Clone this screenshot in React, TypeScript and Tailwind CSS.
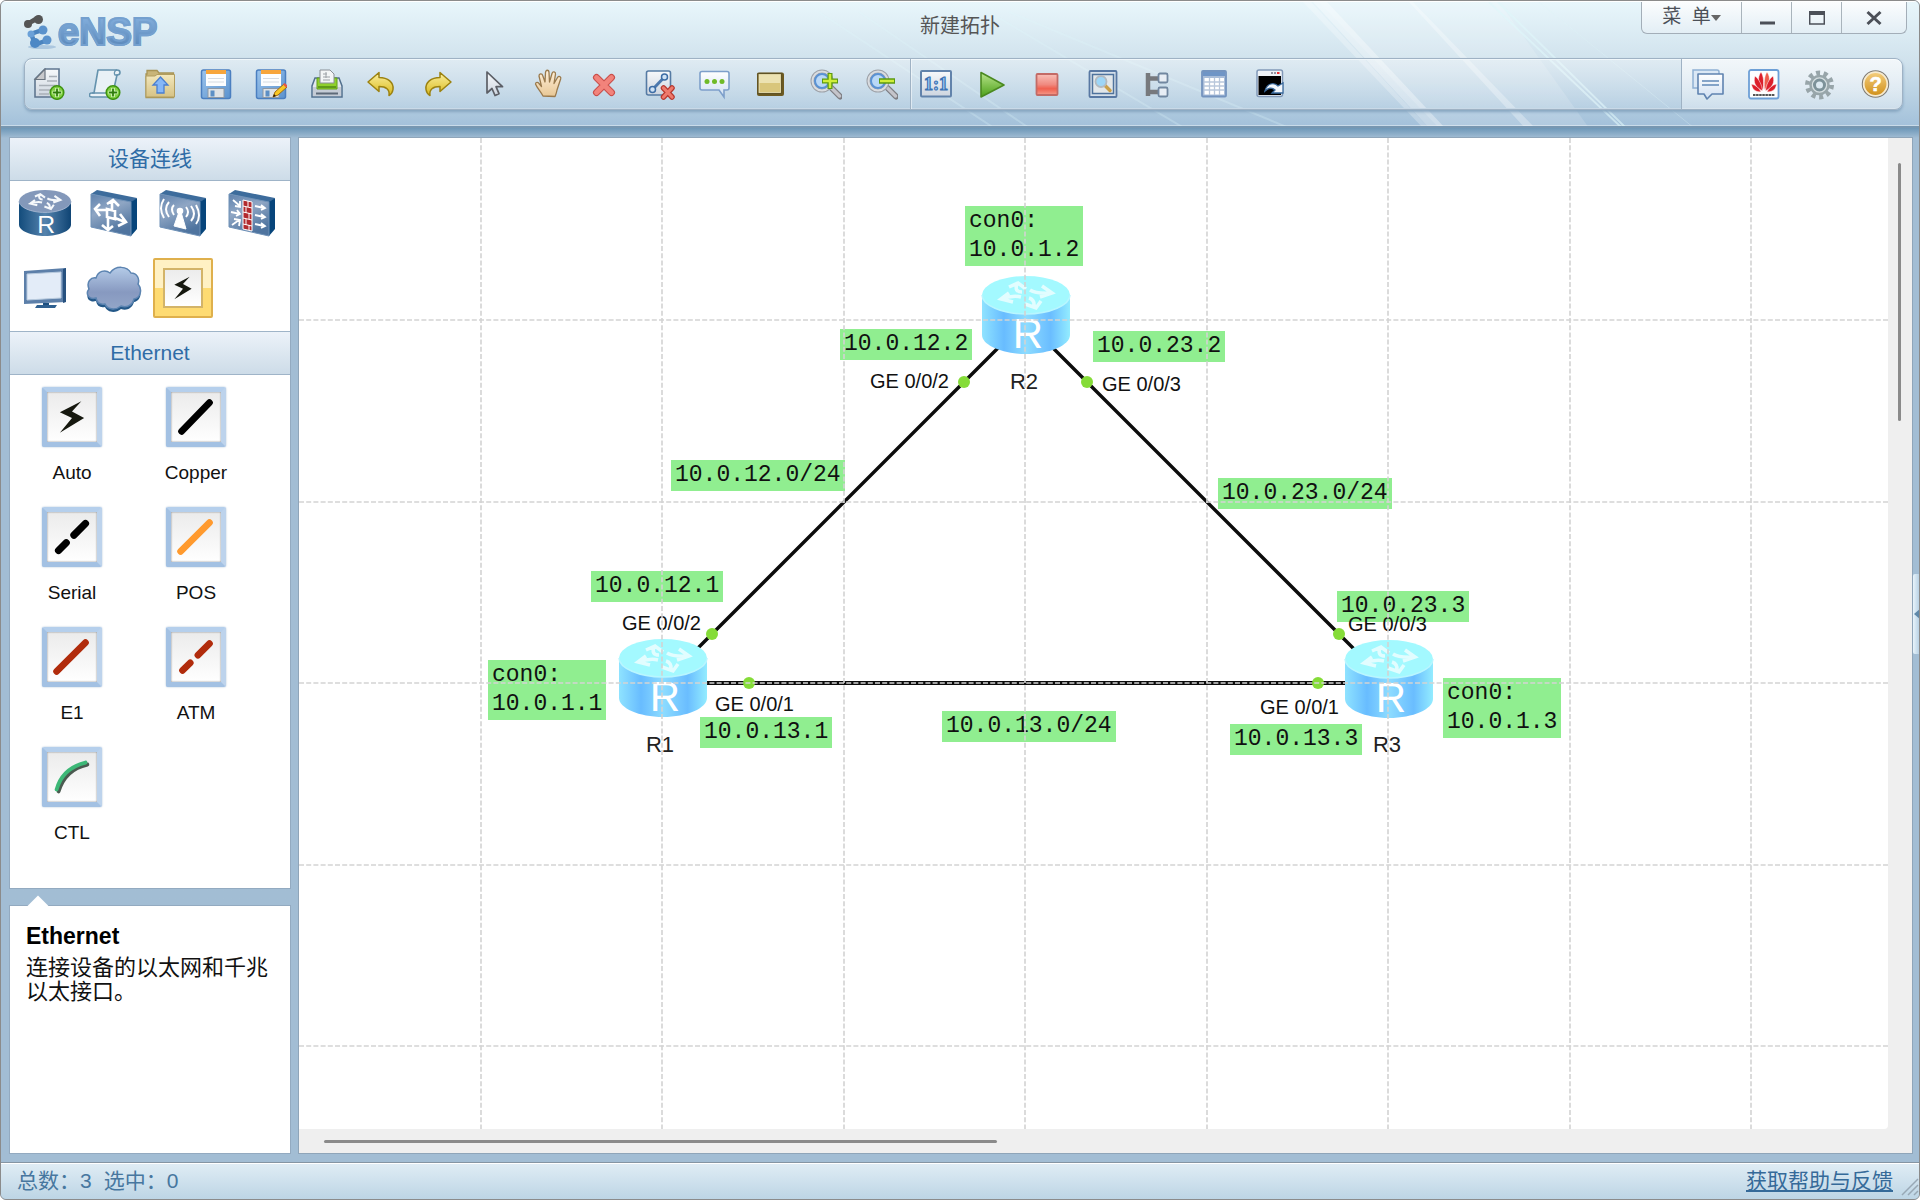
import type { ReactNode } from "react"

const Defs = () => (
    <svg className="absolute w-0 h-0" aria-hidden="true">
        <defs>
            <linearGradient id="paper" x1="0" y1="0" x2="0" y2="1">
                <stop offset="0" stopColor="#f7f9fb" />
                <stop offset="1" stopColor="#cdd5df" />
            </linearGradient>
            <linearGradient id="sand" x1="0" y1="0" x2="0" y2="1">
                <stop offset="0" stopColor="#f3e8bd" />
                <stop offset="1" stopColor="#d6c284" />
            </linearGradient>
            <linearGradient id="blue" x1="0" y1="0" x2="1" y2="1">
                <stop offset="0" stopColor="#9cc4ec" />
                <stop offset="1" stopColor="#5b92ce" />
            </linearGradient>
            <linearGradient id="gold" x1="0" y1="0" x2="0" y2="1">
                <stop offset="0" stopColor="#fbf0a0" />
                <stop offset="1" stopColor="#d9b91c" />
            </linearGradient>
            <linearGradient id="green" x1="0" y1="0" x2="0" y2="1">
                <stop offset="0" stopColor="#b9e48c" />
                <stop offset="1" stopColor="#4ba018" />
            </linearGradient>
            <linearGradient id="red" x1="0" y1="0" x2="0" y2="1">
                <stop offset="0" stopColor="#f9c0b8" />
                <stop offset="0.5" stopColor="#f08a80" />
                <stop offset="0.7" stopColor="#f0604f" />
                <stop offset="1" stopColor="#f59a8a" />
            </linearGradient>
            <linearGradient id="bubble" x1="0" y1="0" x2="0" y2="1">
                <stop offset="0" stopColor="#ffffff" />
                <stop offset="1" stopColor="#cfdff2" />
            </linearGradient>
            <linearGradient id="orange" x1="0" y1="0" x2="0" y2="1">
                <stop offset="0" stopColor="#f6d183" />
                <stop offset="1" stopColor="#cf8d14" />
            </linearGradient>
            <linearGradient id="skin" x1="0" y1="0" x2="0" y2="1">
                <stop offset="0" stopColor="#fff0da" />
                <stop offset="1" stopColor="#e8c795" />
            </linearGradient>
            <linearGradient id="face" x1="0" y1="0" x2="0.4" y2="1">
                <stop offset="0" stopColor="#5f82ad" />
                <stop offset="0.45" stopColor="#8fa6c4" />
                <stop offset="1" stopColor="#4f749f" />
            </linearGradient>
            <linearGradient id="sideDark" x1="0" y1="0" x2="1" y2="0">
                <stop offset="0" stopColor="#134c7c" />
                <stop offset="0.5" stopColor="#5583ad" />
                <stop offset="1" stopColor="#0f4474" />
            </linearGradient>
            <linearGradient id="sideLight" x1="0" y1="0" x2="1" y2="0">
                <stop offset="0" stopColor="#8fe3ff" />
                <stop offset="0.25" stopColor="#68bcff" />
                <stop offset="0.5" stopColor="#8ddcff" />
                <stop offset="0.78" stopColor="#6abdff" />
                <stop offset="1" stopColor="#93ecff" />
            </linearGradient>
            <linearGradient id="cloud" x1="0" y1="0" x2="0" y2="1">
                <stop offset="0" stopColor="#b4cbe8" />
                <stop offset="0.6" stopColor="#8799c0" />
                <stop offset="1" stopColor="#93a6c8" />
            </linearGradient>
        </defs>
    </svg>
)

const Icon = ({ children }: { children: ReactNode }) => (
    <svg viewBox="0 0 32 32" className="w-8 h-8" aria-hidden="true">{children}</svg>
)

const Plus = () => (
    <g>
        <circle cx="24" cy="24.500" r="6.800" fill="#7fd040" stroke="#3f9310" strokeWidth="1.500" />
        <path d="M24 20v9M19.500 24.500h9" stroke="#dcf8c4" strokeWidth="3.500" />
        <path d="M24 20.500v8M20 24.500h8" stroke="#2f7d0c" strokeWidth="1.800" />
    </g>
)

const Floppy = () => (
    <g>
        <rect x="1.500" y="2" width="29" height="28.500" rx="2" fill="url(#blue)" stroke="#4b7fc0" strokeWidth="1.500" />
        <rect x="6" y="2" width="20" height="4" fill="#f7a53b" />
        <rect x="6" y="6" width="20" height="12" fill="#fcfdfe" />
        <path d="M8 10.500h16M8 14h16" stroke="#d5dbe2" />
        <rect x="8" y="20.500" width="16" height="9" fill="#dfe2e5" stroke="#8c98a5" />
        <rect x="10.500" y="22.500" width="4" height="6" fill="#5d8fc5" />
    </g>
)

const Lens = () => (
    <g>
        <path d="M21 19.500l9 9" stroke="#7d7d82" strokeWidth="6" strokeLinecap="round" />
        <path d="M21 19.500l8.500 8.500" stroke="#c4c4ca" strokeWidth="3.500" strokeLinecap="round" />
        <circle cx="12" cy="13" r="9.500" fill="#b9d8f7" stroke="#9ea2a8" strokeWidth="4" />
        <circle cx="12" cy="13" r="9.500" fill="none" stroke="#d9dce0" strokeWidth="2" />
        <circle cx="12" cy="13" r="7" fill="none" stroke="#5a92d4" strokeWidth="2" />
    </g>
)

const editTools = [
    {
        name: "New topology",
        icon: (
            <g>
                <path d="M12 1h14v28H2V11z" fill="url(#paper)" stroke="#5f7690" strokeWidth="1.600" />
                <path d="M12 1v10.500H2z" fill="#c8c9cc" stroke="#6b7580" strokeWidth="1.200" />
                <path d="M16 8.500h8M14 13h10M6 17.500h18M6 22h12M6 26h10" stroke="#a9b0b8" strokeWidth="1.500" />
                <Plus />
            </g>
        ),
    },
    {
        name: "New paper",
        icon: (
            <g>
                <path d="M9 2h19c4 0 4 5 0 5l-5 22H3c-4 0-3-4 0-4h2z" fill="#e9f1f6" stroke="#6593ae" strokeWidth="1.600" strokeLinejoin="round" />
                <path d="M28 2c-3 0-3 4-2 5h3M3 25h17" fill="none" stroke="#6593ae" strokeWidth="1.300" />
                <Plus />
            </g>
        ),
    },
    {
        name: "Open",
        icon: (
            <g>
                <path d="M3 6V2.500h10L15 5h14.500v24.500H2V6z" fill="#c9b578" stroke="#a89455" strokeWidth="1.300" />
                <path d="M2 8h9l2-1.500h17.500V29H2z" fill="url(#sand)" stroke="#b19d5f" />
                <path d="M16.500 9l7.500 8h-4v8h-7v-8H9z" fill="#86b7f7" stroke="#4b7fd0" strokeWidth="1.300" />
            </g>
        ),
    },
    { name: "Save", icon: <Floppy /> },
    {
        name: "Save as",
        icon: (
            <g>
                <Floppy />
                <path d="M18 29l2-5 9-8 3 3-9 8z" fill="#f9c823" stroke="#a26b11" />
                <path d="M28 16.500l1.500-1.500 3 2.500-1.500 2z" fill="#e2574a" />
                <path d="M18 29l1-3 2 2z" fill="#2b1c06" />
            </g>
        ),
    },
    {
        name: "Print",
        icon: (
            <g>
                <path d="M4 10h24l3 8v11H1V18z" fill="#e3e8ed" stroke="#52708e" strokeWidth="1.500" />
                <path d="M2 19h28v9H2z" fill="#c5ccd6" />
                <path d="M6 10h20v11H6z" fill="#8fd02c" stroke="#62a016" />
                <path d="M7 18h18v2H7z" fill="#5f9a1a" />
                <path d="M9 2h10l4 4v9H9z" fill="#f4f5f6" stroke="#8b9096" />
                <path d="M12 6h4M12 9h7M12 12h7M15 4v6" stroke="#9da1a6" />
                <path d="M5 25.500h22" stroke="#5e6a78" strokeWidth="2" />
            </g>
        ),
    },
    {
        name: "Undo",
        icon: <path d="M2 14L13 4.500v5c9 0 15 5 14 12-.5 3-2 5-4 6 1-6-3-9-10-9v5z" fill="url(#gold)" stroke="#9c8210" strokeWidth="1.500" strokeLinejoin="round" />,
    },
    {
        name: "Redo",
        icon: <path d="M29 14L18 4.500v5c-9 0-15 5-14 12 .5 3 2 5 4 6-1-6 3-9 10-9v5z" fill="url(#gold)" stroke="#9c8210" strokeWidth="1.500" strokeLinejoin="round" />,
    },
    {
        name: "Select",
        icon: <path d="M10 4v21l5-4.500 3 7 4-1.800-3-7h6.500z" fill="url(#paper)" stroke="#5c5f66" strokeWidth="1.700" strokeLinejoin="round" />,
    },
    {
        name: "Pan",
        icon: <path d="M10 28c-2-4-6-8-7.500-12 0-2 2.500-2 3.500-.5l2.500 3L6 8c0-2.500 3-3 3.700-.5L12 14l.5-9.500c0-3 3.500-3 3.500 0L16.500 14 19 5.500c.7-2.500 3.800-2 3.500.7L21 15.500l3.500-6c1.300-2 3.800-1 3.200 1.200L24 22c-.5 3-1 4-2 6.500z" fill="url(#skin)" stroke="#9a7a4d" strokeWidth="1.300" strokeLinejoin="round" />,
    },
    {
        name: "Delete",
        icon: (
            <g strokeLinecap="round">
                <path d="M8.500 9.500l15 15M23.500 9.500l-15 15" stroke="#c9504c" strokeWidth="7" />
                <path d="M8.500 9.500l15 15M23.500 9.500l-15 15" stroke="#f2837b" strokeWidth="4.800" />
            </g>
        ),
    },
    {
        name: "Delete links",
        icon: (
            <g>
                <rect x="2.500" y="3" width="24" height="24" rx="2" fill="url(#paper)" stroke="#567ba4" strokeWidth="1.600" />
                <path d="M9 21L20 9.500" stroke="#4d78ad" strokeWidth="3" />
                <circle cx="8.500" cy="21.500" r="3" fill="#cfe2f5" stroke="#3e6da5" strokeWidth="1.500" />
                <circle cx="20.500" cy="9" r="3" fill="#cfe2f5" stroke="#3e6da5" strokeWidth="1.500" />
                <path d="M19.500 20l8.500 9M28 20l-8.500 9" stroke="#b8382f" strokeWidth="5.500" strokeLinecap="round" />
                <path d="M19.500 20l8.500 9M28 20l-8.500 9" stroke="#ee7a6d" strokeWidth="3.200" strokeLinecap="round" />
            </g>
        ),
    },
    {
        name: "Text",
        icon: (
            <g>
                <path d="M3 3.500h25q2 0 2 2V20q0 2-2 2h-3v7l-5-7H3q-2 0-2-2V5.500q0-2 2-2z" fill="url(#bubble)" stroke="#7d9fca" strokeWidth="1.600" />
                <g fill="#6fba28">
                    <circle cx="8" cy="13.500" r="2.500" />
                    <circle cx="15.500" cy="13.500" r="2.500" />
                    <circle cx="23" cy="13.500" r="2.500" />
                </g>
            </g>
        ),
    },
    {
        name: "Palette",
        icon: (
            <g>
                <rect x="2" y="4.500" width="27" height="23.500" rx="2" fill="#6d5a22" />
                <rect x="3" y="5.500" width="23.500" height="20" fill="#ece2b2" stroke="#5f5224" strokeWidth="1.200" />
                <path d="M4.500 15h20.500v9H4.500z" fill="#d9c67c" />
            </g>
        ),
    },
    {
        name: "Zoom in",
        icon: (
            <g>
                <Lens />
                <path d="M20 5v16M12 13h16" stroke="#5d9a10" strokeWidth="5" />
                <path d="M20 6v14M13 13h14" stroke="#cfee3a" strokeWidth="2.500" />
            </g>
        ),
    },
    {
        name: "Zoom out",
        icon: (
            <g>
                <Lens />
                <path d="M13 13h16" stroke="#5d9a10" strokeWidth="5.500" />
                <path d="M14 13h14" stroke="#cfee3a" strokeWidth="2.500" />
            </g>
        ),
    },
]

const runTools = [
    {
        name: "Original size",
        icon: (
            <g>
                <rect x="1" y="3" width="30" height="25.500" rx="1" fill="url(#paper)" stroke="#6283ab" strokeWidth="2" />
                <text x="16" y="22" textAnchor="middle" fontFamily="Liberation Serif, serif" fontWeight="700" fontSize="18" fill="#a9d0f5" stroke="#3b72b4" strokeWidth="1.200">1:1</text>
            </g>
        ),
    },
    { name: "Start", icon: <path d="M5 4.500l23 12.500L5 29z" fill="url(#green)" stroke="#4b8a20" strokeWidth="1.600" strokeLinejoin="round" /> },
    { name: "Stop", icon: <rect x="5.500" y="6" width="21" height="21" rx="1" fill="url(#red)" stroke="#c36b66" strokeWidth="1.800" /> },
    {
        name: "Inspect",
        icon: (
            <g>
                <rect x="2.500" y="3" width="27" height="26" rx="1" fill="#d4dfea" stroke="#5878a3" strokeWidth="1.800" />
                <rect x="5.500" y="6.500" width="21" height="19" fill="#e2e7ea" stroke="#4f739d" strokeWidth="1.500" />
                <path d="M17.500 17l5.500 5.500" stroke="#caa04a" strokeWidth="3.500" strokeLinecap="round" />
                <circle cx="14" cy="13.500" r="5.500" fill="#9ed6f7" stroke="#b2bac1" strokeWidth="1.800" />
            </g>
        ),
    },
    {
        name: "Tree",
        icon: (
            <g>
                <path d="M6 5v23M6 10.500h10M6 24h10" fill="none" stroke="#77797d" strokeWidth="4.500" />
                <rect x="16.500" y="5.500" width="9" height="9" rx="1.500" fill="#e8eef5" stroke="#7187a0" strokeWidth="1.800" />
                <rect x="16.500" y="19.500" width="9" height="9" rx="1.500" fill="#e8eef5" stroke="#7187a0" strokeWidth="1.800" />
            </g>
        ),
    },
    {
        name: "Interfaces",
        icon: (
            <g>
                <rect x="4" y="3" width="24" height="25.500" rx="1" fill="#a9bdd8" stroke="#7494bf" strokeWidth="1.800" />
                <path d="M5 4h22v4H5z" fill="#6f95c6" />
                <path d="M6.500 10h19.500v16.500H6.500z" fill="#fff" />
                <path d="M11.500 10v17M16.500 10v17M21.500 10v17M6 14h20M6 18h20M6 22h20" stroke="#b9c7db" strokeWidth="1.300" />
            </g>
        ),
    },
    {
        name: "Console",
        icon: (
            <g>
                <rect x="4" y="2" width="25.500" height="26.500" rx="2" fill="#eef2f6" stroke="#8199b8" strokeWidth="1.500" />
                <path d="M18 5h2M21 5h2" stroke="#778" strokeWidth="1.500" />
                <path d="M24 5h2.500" stroke="#e33" strokeWidth="2" />
                <rect x="5.500" y="8" width="22.500" height="19" fill="#000" />
                <path d="M12 23c2-8 9-9 13-5l5-3v10H19l3-3c-3-3-7-2-10 1z" fill="#f2f7fc" stroke="#39689b" strokeWidth="1.300" />
            </g>
        ),
    },
]

const helpTools = [
    {
        name: "Forum",
        icon: (
            <g>
                <path d="M1 2h24q2 0 2 2v14q0 2-2 2H1z" fill="#dbe8f5" stroke="#8fb0d3" strokeWidth="1.500" />
                <path d="M6 6h25v20H20l-5 5-3-5H6z" fill="url(#bubble)" stroke="#5f83b0" strokeWidth="1.600" strokeLinejoin="round" />
                <path d="M10 13h17M10 17h17" stroke="#6289b8" strokeWidth="1.300" />
            </g>
        ),
    },
    {
        name: "Huawei",
        icon: (
            <g>
                <rect x="1" y="2" width="29.500" height="28.500" rx="2" fill="#fdfefe" stroke="#6d9fd6" strokeWidth="1.800" />
                <g fill="#dc1f2b" stroke="#fff" strokeWidth="0.500">
                    <path d="M15 22C10 17 9 9 13 4c3 4 3 12 2 18z" />
                    <path d="M16.500 22C22 17 23 9 19 4c-3 4-3 12-2.500 18z" fill="#ee5c4c" />
                    <path d="M14.500 23C7 19 5 14 7 8c4 3 7 9 7.500 15z" />
                    <path d="M17.500 23C25 19 27 14 25 8c-4 3-7 9-7.500 15z" />
                    <path d="M13 24c-6 0-9-3-9.500-8 4 1 8 4 9.500 8z" />
                    <path d="M19 24c6 0 9-3 9.500-8-4 1-8 4-9.500 8z" />
                </g>
                <path d="M5 27h22" stroke="#555" strokeWidth="2.200" strokeDasharray="2.500 0.600" />
            </g>
        ),
    },
    {
        name: "Settings",
        icon: (
            <g>
                <circle cx="15.500" cy="17" r="12" fill="none" stroke="#98a5a9" strokeWidth="5" strokeDasharray="4 3.540" />
                <circle cx="15.500" cy="17" r="9" fill="#d6dfe1" stroke="#98a6aa" strokeWidth="2.500" />
                <circle cx="15.500" cy="17" r="5" fill="#dce9f1" stroke="#7d9299" strokeWidth="3" />
            </g>
        ),
    },
    {
        name: "Help",
        icon: (
            <g>
                <circle cx="15.500" cy="16" r="13" fill="url(#orange)" stroke="#7f7c76" strokeWidth="1.500" />
                <circle cx="15.500" cy="16" r="11.800" fill="none" stroke="#f5ead0" strokeWidth="1.800" />
                <text x="15.500" y="23" textAnchor="middle" fontFamily="Liberation Sans, sans-serif" fontWeight="700" fontSize="20" fill="#fff" stroke="#fff" strokeWidth="0.600">?</text>
            </g>
        ),
    },
]

const ToolButtons = ({ tools }: { tools: { name: string; icon: ReactNode }[] }) => (
    <>
        {tools.map((tool) => (
            <button key={tool.name} aria-label={tool.name} className="w-8 h-8">
                <Icon>{tool.icon}</Icon>
            </button>
        ))}
    </>
)

const Logo = () => (
    <div className="flex items-center pl-[17px] pt-[10px]">
        <svg viewBox="0 0 36 36" className="w-9 h-9" aria-hidden="true">
            <ellipse cx="20" cy="33" rx="14" ry="2" fill="#8fb3d3" opacity="0.600" />
            <path d="M6 9c5-1 6-4 11-5" stroke="#555" strokeWidth="5" strokeLinecap="round" />
            <circle cx="6" cy="10" r="4" fill="#555" />
            <circle cx="16.500" cy="5.500" r="4.500" fill="#555" />
            <path d="M21 16c-7 2-12 3-11 6s2 6 4 8c5-1 8-3 12-4" fill="none" stroke="#4b84bf" strokeWidth="4.500" strokeLinecap="round" />
            <circle cx="21" cy="16" r="4.500" fill="#5a92cc" />
            <circle cx="9" cy="20" r="3.500" fill="#6ba1d8" />
            <circle cx="13" cy="29" r="5" fill="#4d88c5" />
            <circle cx="25" cy="26" r="4.500" fill="#5a92cc" />
        </svg>
        <span className="bg-linear-to-b from-[#8ab5e2] to-[#5482b4] bg-clip-text text-transparent text-[38px] leading-10 font-black [-webkit-text-stroke:2px_#74a0cf]">
            eNSP
        </span>
    </div>
)

const WindowButtons = () => (
    <div className="flex justify-self-end mr-2 h-8 divide-x divide-[#a9b4bc] rounded-b-md border border-t-0 border-[#a3aeb8] bg-linear-to-b from-[#fbfdfe] to-[#e3eef5] text-[#4c5058]">
        <button className="flex w-[100px] items-center justify-center text-[19px] whitespace-pre">
            菜  单
            <svg viewBox="0 0 10 6" className="w-[10px] h-[6px]" aria-hidden="true"><path d="M0 0h10L5 6z" fill="#666" /></svg>
        </button>
        <button aria-label="Minimize" className="flex w-[50px] items-center justify-center">
            <svg viewBox="0 0 16 16" className="w-4 h-4"><path d="M1 13h15" stroke="#4c5058" strokeWidth="3" /></svg>
        </button>
        <button aria-label="Maximize" className="flex w-[50px] items-center justify-center">
            <svg viewBox="0 0 16 14" className="w-4 h-[14px]"><path d="M.7 1h14.600v12H.7z" fill="none" stroke="#4c5058" strokeWidth="1.500" /><path d="M0 0h16v4H0z" fill="#4c5058" /></svg>
        </button>
        <button aria-label="Close" className="flex w-16 items-center justify-center">
            <svg viewBox="0 0 16 16" className="w-4 h-4"><path d="M1.500 2l13 12M14.500 2l-13 12" stroke="#4c5058" strokeWidth="3" /></svg>
        </button>
    </div>
)

// light streaks across the title bar
const Rays = () => (
    <svg className="pointer-events-none absolute right-0 top-0 h-full w-[1100px]" viewBox="0 0 1100 126" preserveAspectRatio="xMaxYMin slice" aria-hidden="true">
        <g fill="#fff">
            <path d="M500 0h180l90 126H620z" opacity="0.150" />
            <path d="M484 0h8l118 126h-6z" opacity="0.250" />
            <path d="M494 0h14l118 126h-16z" opacity="0.350" />
            <path d="M590 0h4l122 126h-10z" opacity="0.300" />
        </g>
        <g stroke="#dff6fa" fill="none">
            <path d="M670 0l133 126M679 0l128 126" strokeWidth="2" opacity="0.600" />
            <path d="M720 0l155 126" opacity="0.300" />
            <path d="M0 10l175 116M40 10l170 116M170 10l195 116M190 10l280 116" opacity="0.250" strokeWidth="2" />
        </g>
    </svg>
)

const Header = () => (
    <header className="relative border-b-2 border-[#7797b1] border-t border-t-white bg-linear-to-b from-[#e8f6fb] via-[#cfe1ec] to-[#a3c1da] px-1 pb-4 shadow-[inset_0_-1px_0_#c9dbe9]">
        <Rays />
        <div className="relative grid h-14 grid-cols-[1fr_auto_1fr] items-start">
            <Logo />
            <h1 className="pt-2 text-[20px] leading-8 text-[#555]">新建拓扑</h1>
            <WindowButtons />
        </div>
        <div className="relative mr-3 ml-[19px] flex h-[52px] rounded-lg border border-[#9fb2c4] bg-linear-to-b from-white/30 to-white/10 shadow-[inset_0_1px_0_#f0f7fb,inset_0_-1px_0_#c9d9e7,0_2px_3px_#86a5c0]">
            <div className="flex w-[886px] items-center justify-between border-r border-[#9fb2c4] pl-2 pr-3">
                <ToolButtons tools={editTools} />
            </div>
            <div className="flex w-[386px] items-center justify-between border-l border-white/50 pl-2 pr-3">
                <ToolButtons tools={runTools} />
            </div>
            <div className="ml-auto flex items-center gap-6 rounded-r-lg border-l border-[#9fb2c4] bg-linear-to-b from-white/60 to-white/30 pl-2.5 pr-2.5">
                <ToolButtons tools={helpTools} />
            </div>
        </div>
    </header>
)

const Router = ({ light }: { light?: boolean }) => (
    <svg viewBox="0 0 88 78" className="w-full overflow-visible" aria-hidden="true">
        <path d="M0 19v40c0 10 20 19 44 19s44-9 44-19V19z" fill={light ? "url(#sideLight)" : "url(#sideDark)"} />
        <ellipse cx="44" cy="19" rx="44" ry="19" fill={light ? "#a3f9ff" : "#8398ba"} />
        <path d="M0 19c0 10 20 19 44 19s44-9 44-19" fill="none" stroke={light ? "#b9f6ff" : "#a5b7d0"} strokeWidth="1.500" />
        <g stroke={light ? "#e2fdff" : "#f5f8fb"} strokeWidth="3.500" fill="none">
            <path d="M40 16Q32 16 35 8M27 11l9-4 8 6M48 14q6 4 22 3M60 10l10 7-12 4M39 21q-8-2-20 2M27 17l-8 6 12 3M47 22q6 2 5 9M43 28l11 4 5-7" />
        </g>
        <text x="46" y="72" textAnchor="middle" fontFamily="Liberation Sans, sans-serif" fontSize="42" fill="#fff">R</text>
    </svg>
)

const Box = ({ children }: { children: ReactNode }) => (
    <svg viewBox="0 0 48 48" className="w-12 h-12" aria-hidden="true">
        <path d="M1 5l6-4 40 8-6 5z" fill="#3d6c9c" />
        <path d="M41 13l6-4v31l-6 7z" fill="#07457b" />
        <path d="M1 5l40 8v34L1 38z" fill="url(#face)" stroke="#6f91b7" />
        <g stroke="#fff" fill="none" strokeWidth="2.600">{children}</g>
    </svg>
)

const Bolt = ({ className }: { className: string }) => (
    <svg viewBox="0 0 30 36" className={className} aria-hidden="true">
        <path d="M25 1L2 13l13 6L2 35l26-16-13-7z" fill="#16180f" />
    </svg>
)

const devices = [
    { name: "Router", icon: <div className="w-[52px]"><Router /></div> },
    {
        name: "Switch",
        icon: (
            <Box>
                <path d="M17 20l8 2v8l-8-2zM18 21H6M10 15l-5 5 5 7M22 22V11M17 15l6-4 6 6M25 29l10 4M30 25l6 8-8 4M18 28v12M12 36l6 5 5-4" />
            </Box>
        ),
    },
    {
        name: "Wireless",
        icon: (
            <Box>
                <path d="M20 23l-5 14 12 3-5-17z" fill="#fff" strokeWidth="1" />
                <circle cx="21" cy="22" r="2" fill="#fff" />
                <path d="M15 16q-4 4 0 10M10 13q-6 7 0 15M5 10q-6 9 0 19M27 18q4 5 0 10M32 17q6 8 0 15M37 16q6 11 0 19" strokeWidth="2" />
            </Box>
        ),
    },
    {
        name: "Firewall",
        icon: (
            <Box>
                <path d="M15 11l9 2v29l-9-2z" fill="#b22a2e" strokeWidth="1" />
                <path d="M15 17l9 2M15 23l9 2M15 29l9 2M15 35l9 2M20 12v6M18 18v6M21 24v6M18 30v6M21 36v5" strokeWidth="1" />
                <path d="M5 11l7 6M12 12v6l-5-1M3 23l9 2M9 21l3 4-4 2M4 36l7-5M6 30l6 1-1 6M27 17l9 2M33 16l4 3-4 2M27 26l9 2M33 25l4 3-4 2M27 35l9 2M33 34l4 3-4 2" strokeWidth="1.800" />
            </Box>
        ),
    },
    {
        name: "Terminal",
        icon: (
            <svg viewBox="0 0 44 42" className="w-11 h-[42px]" aria-hidden="true">
                <path d="M1 4l42-3v34L1 37z" fill="#5c7fa9" />
                <path d="M40 2l3-1v34l-3 1z" fill="#27517f" />
                <path d="M4 7l34-2v26L4 33z" fill="#e3ecf8" stroke="#b8cade" />
                <path d="M20 36h6v3h-6z" fill="#1d4f80" />
                <path d="M14 38h20l-2 3H12z" fill="#2f6090" />
            </svg>
        ),
    },
    {
        name: "Cloud",
        icon: (
            <svg viewBox="0 0 56 48" className="w-14 h-12" aria-hidden="true">
                <path d="M10 34C3 36-1 30 3 25 0 18 5 13 10 14c2-7 9-9 14-5 6-8 17-7 21 0 6 0 9 6 7 11 5 6 2 14-4 15-2 7-8 9-13 7-6 5-14 3-16-2-5 1-8-1-9-6z" transform="translate(0 3)" fill="#245888" />
                <path d="M10 34C3 36-1 30 3 25 0 18 5 13 10 14c2-7 9-9 14-5 6-8 17-7 21 0 6 0 9 6 7 11 5 6 2 14-4 15-2 7-8 9-13 7-6 5-14 3-16-2-5 1-8-1-9-6z" fill="url(#cloud)" stroke="#5c84b1" strokeWidth="1.500" />
            </svg>
        ),
    },
]

const links = [
    { name: "Auto", icon: null },
    { name: "Copper", icon: <path d="M11 41L40 11" stroke="#000" strokeWidth="7" strokeLinecap="round" /> },
    { name: "Serial", icon: <path d="M12 40l8-8M28 24l12-12" stroke="#000" strokeWidth="7.500" strokeLinecap="round" /> },
    { name: "POS", icon: <path d="M10 41L40 11" stroke="#ff9a2e" strokeWidth="7" strokeLinecap="round" /> },
    { name: "E1", icon: <path d="M10 41L40 11" stroke="#b12c0c" strokeWidth="7" strokeLinecap="round" /> },
    { name: "ATM", icon: <path d="M12 40l8-8M28 24l12-12" stroke="#b12c0c" strokeWidth="7" strokeLinecap="round" /> },
    { name: "CTL", icon: <><path d="M12 41q7-23 30-28" stroke="#4b5a50" strokeWidth="4" fill="none" strokeLinecap="round" /><path d="M10 39q6-22 30-28" stroke="#3db877" strokeWidth="4" fill="none" strokeLinecap="round" /></> },
]

const PanelTitle = ({ children }: { children: ReactNode }) => (
    <h2 className="flex h-[43px] items-center justify-center border-b border-[#9fb4c8] bg-linear-to-b from-[#ecf2f9] to-[#cddce8] text-[21px] text-[#2f6ca6]">
        {children}
    </h2>
)

const Sidebar = () => (
    <aside className="flex w-[282px] shrink-0 flex-col">
        <section className="grow border border-[#93aac0] bg-white">
            <PanelTitle>设备连线</PanelTitle>
            <div className="grid grid-cols-[repeat(4,60px)] gap-x-[9px] gap-y-[15px] border-b border-[#9fb4c8] pb-[13px] pl-[5px] pt-0.5">
                {devices.map((device) => (
                    <button key={device.name} aria-label={device.name} className="flex h-[60px] items-center justify-center">
                        {device.icon}
                    </button>
                ))}
                <button aria-label="Connections" className="flex h-[60px] items-center justify-center rounded-xs border-2 border-[#dfb04c] bg-linear-to-b from-[#fff1c4] from-50% to-[#fedb72] to-50%">
                    <span className="flex h-10 w-10 items-center justify-center border-2 border-[#d3b469] bg-linear-to-b from-[#ececec] to-white">
                        <Bolt className="w-5 h-7" />
                    </span>
                </button>
            </div>
            <PanelTitle>Ethernet</PanelTitle>
            <div className="grid grid-cols-[124px_124px] pt-3">
                {links.map((link) => (
                    <button key={link.name} className="flex h-[120px] flex-col items-center gap-3.5 text-[19px] leading-6 text-[#111]">
                        <span className="flex h-[60px] w-[60px] items-center justify-center rounded-xs border-5 border-[#a3c1e3] border-t-[#b5cfec] border-r-[#bdd3ec] bg-linear-to-b from-[#ebebeb] to-white shadow-[inset_0_0_2px_#777,0_0_2px_#a9bdd2]">
                            {link.icon
                                ? <svg viewBox="0 0 52 52" className="w-full h-full" aria-hidden="true">{link.icon}</svg>
                                : <Bolt className="w-7 h-9" />}
                        </span>
                        {link.name}
                    </button>
                ))}
            </div>
        </section>
        <section className="relative mt-4 h-[249px] border border-[#93aac0] bg-white px-4 py-4">
            <svg viewBox="0 0 22 11" className="absolute -top-[11px] left-[17px] w-[22px] h-[12px]" aria-hidden="true">
                <path d="M0 11L11 0l11 11z" fill="#fff" />
            </svg>
            <h3 className="text-[23px] font-bold leading-7 text-black">Ethernet</h3>
            <p className="pt-1.5 text-[22px] leading-6 text-[#111]">连接设备的以太网和千兆以太接口。</p>
        </section>
    </aside>
)

const routers = [
    { name: "R1", x: 320, y: 501, nameX: 361, nameY: 593 },
    { name: "R2", x: 683, y: 138, nameX: 725, nameY: 230 },
    { name: "R3", x: 1046, y: 502, nameX: 1088, nameY: 593 },
]

const notes = [
    { text: "con0:\n10.0.1.2", x: 666, y: 68 },
    { text: "10.0.12.2", x: 541, y: 191 },
    { text: "10.0.23.2", x: 794, y: 193 },
    { text: "10.0.12.0/24", x: 372, y: 322 },
    { text: "10.0.23.0/24", x: 919, y: 340 },
    { text: "10.0.12.1", x: 292, y: 433 },
    { text: "con0:\n10.0.1.1", x: 189, y: 522 },
    { text: "10.0.13.1", x: 401, y: 579 },
    { text: "10.0.13.0/24", x: 643, y: 573 },
    { text: "10.0.23.3", x: 1038, y: 453 },
    { text: "10.0.13.3", x: 931, y: 586 },
    { text: "con0:\n10.0.1.3", x: 1144, y: 540 },
]

const ports = [
    { text: "GE 0/0/2", x: 571, y: 231 },
    { text: "GE 0/0/3", x: 803, y: 234 },
    { text: "GE 0/0/2", x: 323, y: 473 },
    { text: "GE 0/0/1", x: 416, y: 554 },
    { text: "GE 0/0/3", x: 1049, y: 474 },
    { text: "GE 0/0/1", x: 961, y: 557 },
]

const dots = [[413, 496], [665, 244], [788, 244], [1040, 496], [450, 545], [1019, 545]]

const gridX = [182, 363, 545, 726, 908, 1089, 1271, 1452]
const gridY = [182, 364, 545, 727, 908]

const Topology = () => (
    <div className="relative min-w-0 grow overflow-hidden rounded-br-sm bg-white">
        {notes.map((note) => (
            <div key={note.text} className="absolute whitespace-pre bg-[#90ee90] px-1 py-px font-['Liberation_Mono',monospace] text-[23px] leading-[29px] text-[#111]" style={{ left: note.x, top: note.y }}>
                {note.text}
            </div>
        ))}
        <svg className="absolute inset-0 h-full w-full" aria-hidden="true">
            <g stroke="#0c0c0c" strokeWidth="3.400">
                <path d="M399 510L700 209M753 209l302 302" />
                <path d="M407 545h640" strokeWidth="4" />
            </g>
            {dots.map(([x, y]) => <circle key={`${x}-${y}`} cx={x} cy={y} r="6" fill="#85dc38" />)}
        </svg>
        {routers.map((router) => (
            <div key={router.name}>
                <div className="absolute w-[88px]" style={{ left: router.x, top: router.y }}><Router light /></div>
                <span className="absolute -translate-x-1/2 text-[22px] leading-7 text-[#222]" style={{ left: router.nameX, top: router.nameY }}>{router.name}</span>
            </div>
        ))}
        {ports.map((port) => (
            <span key={`${port.x}-${port.y}`} className="absolute whitespace-nowrap text-[20px] leading-6 text-[#111]" style={{ left: port.x, top: port.y }}>
                {port.text}
            </span>
        ))}
        <svg className="pointer-events-none absolute inset-0 h-full w-full" aria-hidden="true">
            <g stroke="#d3d3d3" strokeWidth="1.600" strokeDasharray="5 2.200">
                {gridX.map((x) => <line key={x} x1={x} x2={x} y1="0" y2="100%" />)}
                {gridY.map((y) => <line key={y} x1="0" x2="100%" y1={y} y2={y} />)}
            </g>
        </svg>
    </div>
)

const Workspace = () => (
    <main className="flex min-w-0 grow flex-col border border-[#8fa5b9] bg-[#efefef]">
        <div className="flex min-h-0 grow">
            <Topology />
            <div className="flex w-6 shrink-0 justify-end pr-[11px] pt-[25px]">
                <div className="h-[258px] w-[3px] rounded-full bg-[#8a8a8a]" />
            </div>
        </div>
        <div className="h-6 shrink-0 pl-[25px] pt-[11px]">
            <div className="h-[3px] w-[673px] rounded-full bg-[#8a8a8a]" />
        </div>
    </main>
)

const StatusBar = () => (
    <footer className="flex h-[37px] shrink-0 items-center gap-3 border-t border-[#8595a3] bg-linear-to-b from-[#e0edf5] to-[#bdd5e5] pl-4 text-[21px] text-[#47779f] shadow-[inset_0_1px_0_#fff]">
        <span>总数：3</span>
        <span>选中：0</span>
        <a href="#help" className="ml-auto text-[#356a99] underline">获取帮助与反馈</a>
        <svg viewBox="0 0 18 18" className="-ml-1 mt-3 w-[18px] h-[18px]" aria-hidden="true">
            <path d="M1 17L17 1M7 17L17 7M13 17l4-4" stroke="#98a8b5" strokeWidth="1.500" />
        </svg>
    </footer>
)

export default function App() {
    return (
        <div className="flex h-screen min-h-[1100px] flex-col overflow-hidden rounded-md border border-[#8b8b8b] bg-[#a2bdd4] font-['Liberation_Sans','Noto_Sans_CJK_SC',sans-serif]">
            <Defs />
            <Header />
            <div className="flex min-h-0 grow bg-linear-to-b from-[#6d97b7] to-[#a2bdd4] to-[10px] pb-2 pl-2 pt-[9px]">
                <Sidebar />
                <div className="w-[7px] shrink-0" />
                <Workspace />
                <div className="w-1.5 shrink-0 pt-[437px]">
                    <button aria-label="Show panel" className="flex h-20 w-full items-center justify-end rounded-l-xs bg-linear-to-r from-[#e9f4fb] to-[#b9d2e5]">
                        <svg viewBox="0 0 6 10" className="w-[5px] h-2.5"><path d="M6 0v10L0 5z" fill="#5f88a9" /></svg>
                    </button>
                </div>
            </div>
            <StatusBar />
        </div>
    )
}
